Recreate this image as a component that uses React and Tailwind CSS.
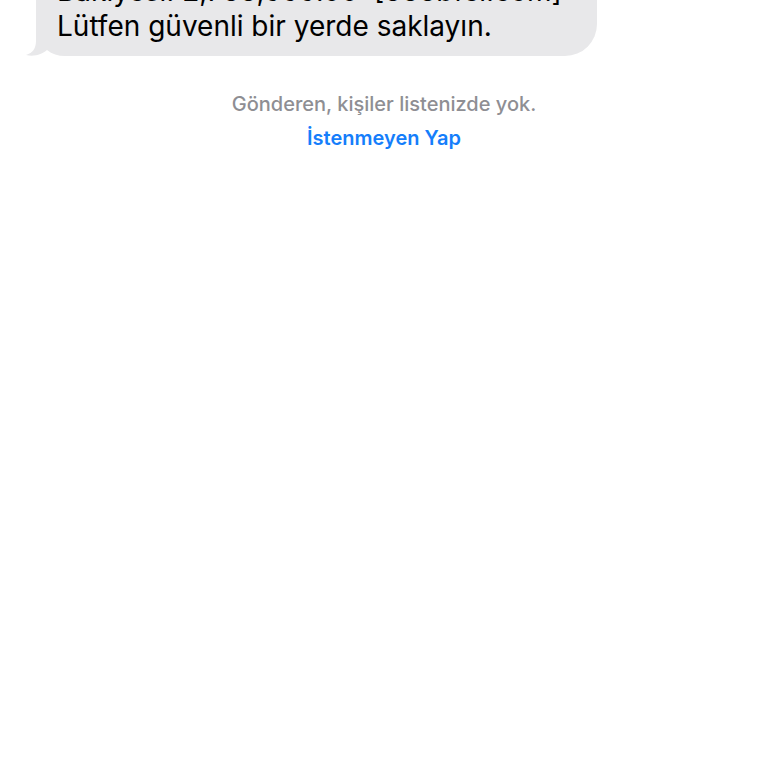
export default function App() {
  return (
    <main className="min-h-screen overflow-hidden bg-white font-['Inter','Liberation_Sans',sans-serif]">
      <div className="-mt-[66px] flex pl-9">
        <div className="relative w-[561px] max-w-full rounded-[32px] rounded-bl-none bg-[#e8e8ea] pt-10 pr-4 pb-3 pl-[21px] text-[28px] leading-[35px] text-black">
          <svg className="absolute bottom-0 -left-3 h-8 w-12" viewBox="0 0 48 32" aria-hidden="true">
            <path d="M12 32V24H48V32Z" fill="#fff" />
            <path d="M12 0V17C12 24 9 29 2 31C11 33 18 30 23 26C28 30 34 32 41 32H48V0Z" fill="#e8e8ea" />
          </svg>
          <p className="relative whitespace-pre">
            Bakiyesi: 2,788,999.00{"  "}[888bfei.com]
          </p>
          <p className="relative">Lütfen güvenli bir yerde saklayın.</p>
        </div>
      </div>
      <section className="flex flex-col items-center pt-[34px] text-center text-xl">
        <p className="font-medium text-[#8e8e93]">Gönderen, kişiler listenizde yok.</p>
        <button type="button" className="mt-1.5 font-semibold text-[#157efb]">İstenmeyen Yap</button>
      </section>
    </main>
  );
}
